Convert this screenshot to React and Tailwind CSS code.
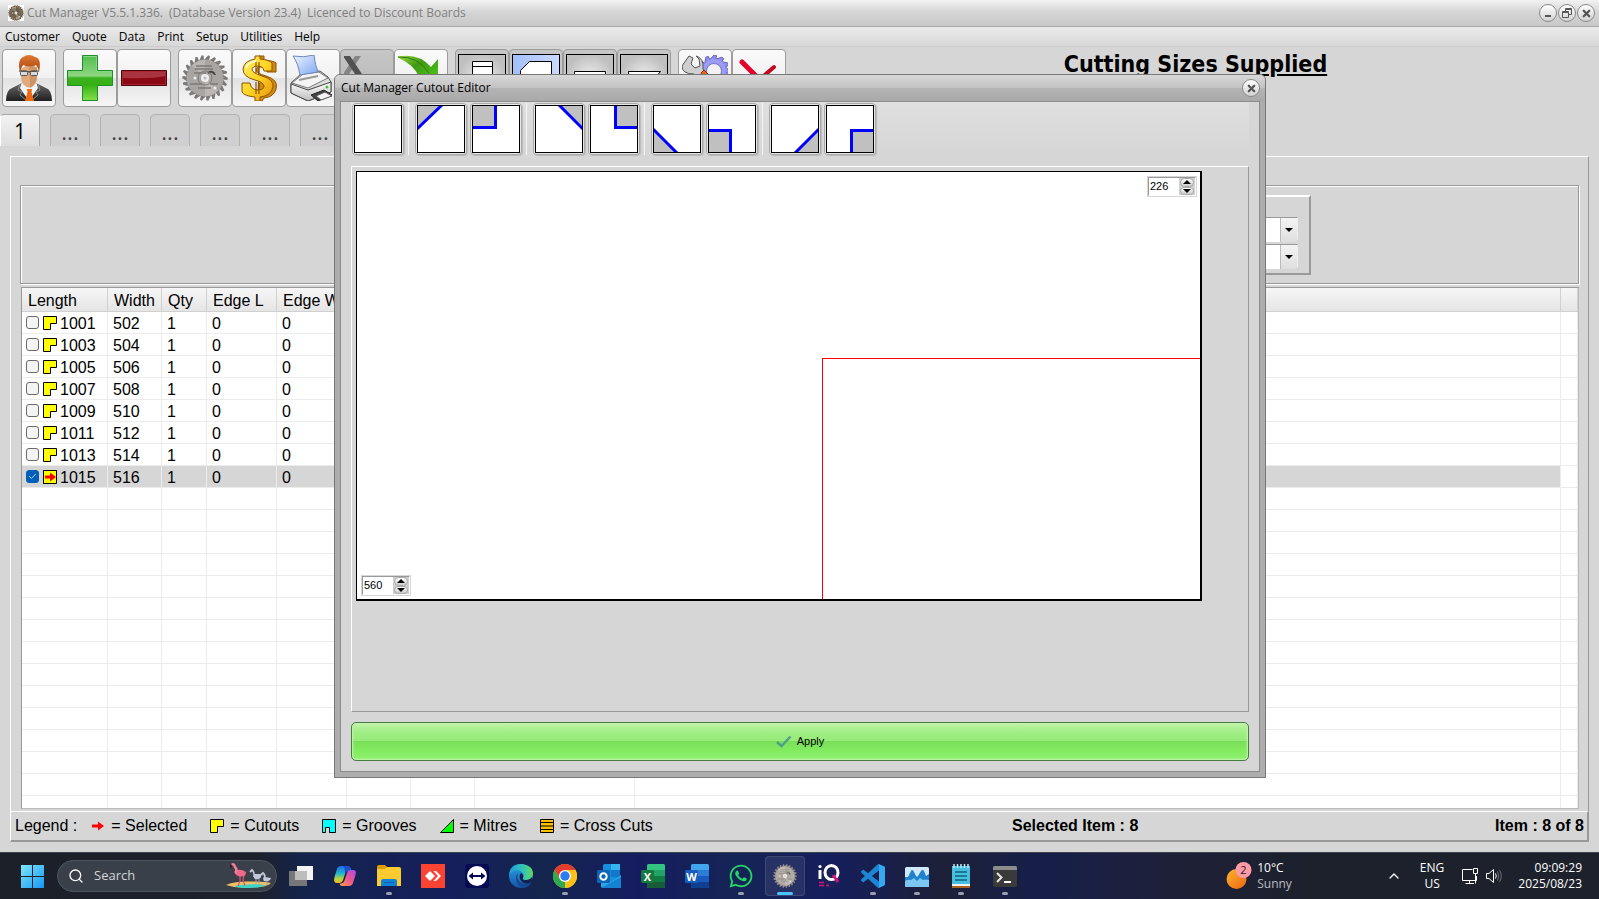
import React from "react";
import { FaWhatsapp } from "react-icons/fa";
import { Check, ChevronUp, Search, X } from "lucide-react";

const UI = "font-['Open_Sans','Noto_Sans',sans-serif]";

/* ---------- drawings ---------- */

function sawPath(cx, cy, outer, inner, teeth) {
  let d = "";
  for (let i = 0; i < teeth; i++) {
    const a = (i / teeth) * Math.PI * 2;
    const b = ((i + 0.3) / teeth) * Math.PI * 2;
    const p = (r, t) => `${(cx + r * Math.cos(t)).toFixed(2)} ${(cy + r * Math.sin(t)).toFixed(2)}`;
    d += `${i ? "L" : "M"}${p(outer, a)}L${p(outer * 0.97, b)}L${p(inner, b)}`;
  }
  return d + "Z";
}

function Saw({ className, light = "#a9a5a3", dark = "#7d7977" }) {
  return (
    <svg viewBox="0 0 46 46" className={className} aria-hidden="true">
      <path d={sawPath(23, 23, 23, 18, 22)} fill={dark} />
      <circle cx="23" cy="23" r="18.500" fill={light} />
      <path d="M23 23L10 10.500A18 18 0 0 1 23 5ZM23 23L36 35.500A18 18 0 0 1 23 41Z" fill="#c6c3c2" opacity=".6" />
      <path d="M14 11H30M13 14H31M12 18H24M8 29H20M28 29H36M16 33H29" stroke={dark} strokeWidth="1.500" />
      <path d="M26 18Q31 15 33 20" stroke="#444" strokeWidth="2" fill="none" />
      <circle cx="23" cy="23" r="7" fill="none" stroke={dark} />
      <circle cx="23" cy="23" r="4" fill="#eee" />
      <circle cx="23" cy="23" r="1.500" fill="#bbb" />
      <circle cx="13" cy="23" r="1.500" fill="#eee" />
      <circle cx="33" cy="33" r="1.500" fill="#eee" />
    </svg>
  );
}

const Person = () => (
  <svg viewBox="0 0 46 46" className="size-[46px]" aria-hidden="true">
    <defs>
      <linearGradient id="suit" x1="0" y1="0" x2="0" y2="1">
        <stop offset="0" stopColor="#6a6a6a" />
        <stop offset="1" stopColor="#1f1f1f" />
      </linearGradient>
      <linearGradient id="hair" x1="0" y1="0" x2="0" y2="1">
        <stop offset="0" stopColor="#e07a35" />
        <stop offset="1" stopColor="#a8410c" />
      </linearGradient>
    </defs>
    <path d="M0 46Q0 35 6 33L16 28H30L40 33Q46 35 46 46Z" fill="url(#suit)" />
    <path d="M16 27L14 33L23 46L32 33L30 27Z" fill="#f3f3f3" />
    <path d="M14 29L12 35L16 37L14 40L22 47M32 29L34 35L30 37L32 40L24 47" stroke="#8a8a8a" fill="none" />
    <path d="M21 34H26L25.500 37L28 46H19L21.500 37Z" fill="#ee6a12" />
    <path d="M15 14Q14 25 17 29Q23 36 29 29Q32 25 31 13L24 8Z" fill="#e0aa7c" />
    <path d="M23 12Q24 22 24 33Q31 30 31 20V12Z" fill="#cf9566" />
    <path d="M14 17Q11 5 17 2Q23-2 29 2Q36 3 33 17Q32 12 30 10Q25 13 17 10Q15 13 14 17Z" fill="url(#hair)" />
    <path d="M13 16H20L23 17L26 16H33" fill="none" stroke="#333" />
    <rect x="14.500" y="16.500" width="7" height="4" rx="1" fill="#d8dbe0" stroke="#555" />
    <rect x="24.500" y="16.500" width="7" height="4" rx="1" fill="#d8dbe0" stroke="#555" />
  </svg>
);

const Plus = () => (
  <svg viewBox="0 0 46 46" className="size-[46px]" aria-hidden="true">
    <defs>
      <linearGradient id="plus" x1="0" y1="0" x2="0" y2="1">
        <stop offset="0" stopColor="#4fbd4b" />
        <stop offset=".45" stopColor="#8ed782" />
        <stop offset=".5" stopColor="#3cb320" />
        <stop offset=".65" stopColor="#35b013" />
        <stop offset="1" stopColor="#86e04c" />
      </linearGradient>
    </defs>
    <path d="M15.500.500H30.500V15.500H45.500V30.500H30.500V45.500H15.500V30.500H.500V15.500H15.500Z" fill="url(#plus)" stroke="#1f8e2c" />
    <path d="M16.500 1.500H29.500V16.500H44.500V20" fill="none" stroke="#86d884" />
  </svg>
);

const Minus = () => (
  <svg viewBox="0 0 46 46" className="size-[46px]" aria-hidden="true">
    <path d="M.500 15.500H45.500V30.500H.500Z" fill="#8b0713" stroke="#4f050c" />
    <path d="M1 16H45V21Q30 24 1 23Z" fill="#a93440" />
    <path d="M1.500 29.500V16.500H44.500V29.500Z" fill="none" stroke="#a52531" />
  </svg>
);

const Dollar = () => (
  <svg viewBox="0 0 46 46" className="size-[46px]" aria-hidden="true">
    <defs>
      <linearGradient id="gold" x1="0" y1="0" x2="1" y2="1">
        <stop offset="0" stopColor="#fff06a" />
        <stop offset=".5" stopColor="#ffd425" />
        <stop offset="1" stopColor="#e5930c" />
      </linearGradient>
    </defs>
    <g strokeLinejoin="round" stroke="#8d5400">
      <path d="M23 1H28V5Q38 6 40 8V17H31Q30 12 25 12Q20 12 20 15Q20 18 30 21Q43 25 40 34Q38 42 28 43L26 46H22Z" fill="#d08a10" />
      <path
        d="M19 1H24V4Q34 5 36 8V16H28Q27 11 22 11Q16 11 16 15Q17 18 26 21Q38 24 37 32Q35 41 24 42V46H19V42Q8 41 6 37V28H14Q15 35 22 35Q28 35 28 31Q27 27 19 25Q7 22 7 14Q8 6 19 4Z"
        fill="url(#gold)"
      />
      <path d="M20 7V18M23 7V19M20 27V39M23 28V39" strokeWidth="1.200" fill="none" />
    </g>
    <path d="M10 13Q12 7 20 6" fill="none" stroke="#fffbd0" strokeWidth="2" />
  </svg>
);

const Printer = () => (
  <svg viewBox="0 0 46 46" className="size-[46px]" aria-hidden="true">
    <defs>
      <linearGradient id="paper" x1="0" y1="0" x2="1" y2="1">
        <stop offset="0" stopColor="#eef5ff" />
        <stop offset="1" stopColor="#7ea6f2" />
      </linearGradient>
      <linearGradient id="prn" x1="0" y1="0" x2="0" y2="1">
        <stop offset="0" stopColor="#fff" />
        <stop offset="1" stopColor="#bdbdbd" />
      </linearGradient>
    </defs>
    <g strokeLinejoin="round">
      <path d="M1 28L12 18L30 16L38 22L41 27V37L18 46L1 38Z" fill="#ddd" stroke="#555" />
      <path d="M1 29L18 35L41 27V37L18 46L1 38Z" fill="url(#prn)" stroke="#444" />
      <path d="M2 28L13 19L29 17L38 23L18 33Z" fill="#f4f4f4" stroke="#777" />
      <path d="M9 25L28 21" stroke="#999" strokeWidth="2" />
      <path d="M3 1Q14 3 24 0Q25 10 28 17L10 20Q8 8 3 1Z" fill="url(#paper)" stroke="#6d86b8" />
      <path d="M21 40L34 35L42 40L28 46Z" fill="#444" stroke="#222" />
      <path d="M26 41L35 37L42 41L31 45Z" fill="#f2f2f2" stroke="#555" />
      <circle cx="37" cy="32" r="1.500" fill="#4db845" />
    </g>
  </svg>
);

const SpreadsheetX = () => (
  <svg viewBox="0 0 46 46" className="size-[46px]" aria-hidden="true">
    <path d="M11 1H17L5 19H-1Z" fill="#858585" />
    <path d="M-1 1H6L18 19H11Z" fill="#515151" />
  </svg>
);

const GreenArrow = () => (
  <svg viewBox="0 0 46 46" className="size-[46px]" aria-hidden="true">
    <defs>
      <linearGradient id="arw" x1="0" y1="0" x2="1" y2="1">
        <stop offset="0" stopColor="#a2dc4c" />
        <stop offset=".4" stopColor="#3f9a10" />
        <stop offset="1" stopColor="#4ed01f" />
      </linearGradient>
    </defs>
    <path d="M-2 2Q20-3 33 12L40 4V30H16L22 23Q15 8-2 2Z" fill="url(#arw)" />
    <path d="M0 2Q20 1 31 18" fill="none" stroke="#2f7a0b" />
  </svg>
);

const ToolsGear = () => (
  <svg viewBox="0 0 46 46" className="size-[46px]" aria-hidden="true">
    <path d={sawPath(32, 16, 16, 12, 12)} fill="#8f8ff0" stroke="#6464b8" />
    <circle cx="32" cy="16" r="12" fill="#9c9cf5" />
    <circle cx="32" cy="16" r="7.500" fill="#f2f2f2" stroke="#7474c4" />
    <path d="M7 1L11 3L9 9L13 13L18 11L17 4L14 1Q22 3 21 14L30 30H20L12 19Q0 19 0 11L2 8Z" fill="#cfcfcf" stroke="#555" />
    <path d="M19 18L22 15L26 19L22 23Z" fill="#e8641a" stroke="#8c3406" />
  </svg>
);

const RedCross = () => (
  <svg viewBox="0 0 46 46" className="size-[46px]" aria-hidden="true">
    <path d="M6 7L36 37" stroke="#e4022c" strokeWidth="5" strokeLinecap="round" />
    <path d="M38 12L10 36" stroke="#c00a24" strokeWidth="4" strokeLinecap="round" />
  </svg>
);

function ViewPicture({ shape, active }) {
  return (
    <svg viewBox="0 0 48 48" className="size-[48px]" aria-hidden="true">
      <defs>
        <radialGradient id="vg">
          <stop offset="0" stopColor="#efefef" />
          <stop offset="1" stopColor="#c0c0c0" />
        </radialGradient>
        <linearGradient id="vb" x1="0" y1="0" x2="1" y2="0">
          <stop offset="0" stopColor="#a3bffb" />
          <stop offset="1" stopColor="#c9d9ff" />
        </linearGradient>
      </defs>
      <rect x=".5" y=".5" width="47" height="47" fill={active ? "url(#vb)" : "url(#vg)"} stroke="#000" />
      <path d={shape} fill="#fff" stroke="#000" />
    </svg>
  );
}

const CutoutMark = ({ selected, className = "" }) => (
  <svg viewBox="0 0 14 14" className={`size-[14px] shrink-0 ${className}`} aria-hidden="true">
    <path d="M.5.5H13.500V7.500H7.500V13.500H.5Z" fill="#ff0" stroke="#000" />
    {selected && <path d="M.5.5H13.500V13.500H.5Z" fill="#ff0" stroke="#000" />}
    {selected && <path d="M2 5.500H7V2.500L13 7L7 11.500V8.500H2Z" fill="#f00" />}
  </svg>
);

/* ---------- main window ---------- */

function RoundButton({ label, children }) {
  return (
    <button
      aria-label={label}
      className="grid size-[18px] place-items-center rounded-full border border-[#8a8a8a] bg-linear-to-b from-white to-[#d2d2d2] text-[#555]"
    >
      {children}
    </button>
  );
}

function TitleBar() {
  return (
    <header className="flex h-[27px] items-center border-b border-[#a8a8a8] bg-linear-to-b from-[#f2f2f2] via-[#d4d4d4] to-[#c9c9c9] pl-2 pr-1">
      <span className="grid size-4 place-items-center bg-white">
        <Saw className="size-4" light="#7b6a52" dark="#5d4e3a" />
      </span>
      <h1 className="flex gap-[6px] pl-[3px] text-[12px] text-[#7f7f7f]">
        <span>Cut Manager V5.5.1.336.</span>
        <span>(Database Version 23.4)</span>
        <span>Licenced to Discount Boards</span>
      </h1>
      <div className="ml-auto flex gap-px">
        <RoundButton label="Minimise">
          <svg viewBox="0 0 10 10" className="size-[10px]"><path d="M2 8H8" stroke="#555" strokeWidth="2" /></svg>
        </RoundButton>
        <RoundButton label="Restore">
          <svg viewBox="0 0 10 10" className="size-[10px]" fill="none" stroke="#555">
            <path d="M3.500 3V.5H9.500V6.500H7M3 1.500H9.500M.5 3.500H6.500V9.500H.5ZM.5 4.500H6" />
          </svg>
        </RoundButton>
        <RoundButton label="Close">
          <X className="size-[11px]" strokeWidth={5} />
        </RoundButton>
      </div>
    </header>
  );
}

const MENU = ["Customer", "Quote", "Data", "Print", "Setup", "Utilities", "Help"];

const TOOLS = [
  [["Customer", <Person />]],
  [["Add", <Plus />], ["Remove", <Minus />]],
  [
    ["Cutting", <Saw className="size-[46px]" />],
    ["Price", <Dollar />],
    ["Print", <Printer />],
    ["Spreadsheet", <SpreadsheetX />, "disabled"],
    ["Send", <GreenArrow />],
  ],
  [
    ["List view", <ViewPicture shape="M14.500 7.500H34.500V40.500H14.500ZM14.500 12.500H34.500" />, "view"],
    ["Cutout view", <ViewPicture active shape="M17.500 7.500H39.500V40.500H8.500V16.500Z" />, "view"],
    ["Groove view", <ViewPicture shape="M8.500 17.500H39.500V36.500H8.500Z" />, "view"],
    ["Mitre view", <ViewPicture shape="M8.500 17.500H40.500L30 30.500H8.500Z" />, "view"],
  ],
  [["Settings", <ToolsGear />], ["Cancel", <RedCross />]],
];

const TOOL_STYLE = {
  normal: "bg-[linear-gradient(#fafafa,#f1f1f1_50%,#e2e2e2_51%,#f6f6f6)]",
  disabled: "bg-linear-to-b from-[#c6c6c6] to-[#b4b4b4]",
  view: "bg-[#c6c6c6]",
};

function Toolbar() {
  return (
    <div className="flex px-[2px] pt-[2px]">
      <div className="flex gap-[7px]">
        {TOOLS.map((group, g) => (
          <div key={g} className="flex">
            {group.map(([label, icon, kind = "normal"]) => (
              <button
                key={label}
                aria-label={label}
                className={`grid h-[58px] w-[54px] place-items-center rounded-[4px] border border-[#9c9c9c] ${TOOL_STYLE[kind]}`}
              >
                {icon}
              </button>
            ))}
          </div>
        ))}
      </div>
      <h2 className="flex-1 pl-2 text-center font-['DejaVu_Sans_Condensed','DejaVu_Sans',sans-serif] text-[23px] leading-[30px] font-bold underline decoration-2 underline-offset-2">
        Cutting Sizes Supplied
      </h2>
    </div>
  );
}

function Tabs() {
  return (
    <div role="tablist" className="mt-[7px] flex gap-[10px]">
      <button role="tab" aria-selected="true" className="h-8 w-10 rounded-t-[4px] border border-b-0 border-[#a6a6a6] border-l-white bg-linear-to-b from-[#f2f2f2] to-[#dedede] text-[21px] leading-7">
        1
      </button>
      {[2, 3, 4, 5, 6, 7].map((n) => (
        <button key={n} role="tab" aria-label={`Sheet ${n}`} className="h-8 w-10 rounded-t-[5px] border border-b-0 border-[#b2b2b2] bg-[#cfcfcf] text-[22px] leading-8 text-[#444]">
          ...
        </button>
      ))}
    </div>
  );
}

function Combo({ label }) {
  return (
    <div className="grid h-[23px] border border-[#999] border-r-[#eee] border-b-[#eee] bg-white">
      <select aria-label={label} className="col-start-1 row-start-1 w-full appearance-none bg-white outline-none" />
      <span className="pointer-events-none col-start-1 row-start-1 grid w-[17px] place-items-center justify-self-end border-l border-[#bbb] bg-linear-to-b from-[#f4f4f4] to-[#dedede]">
        <svg viewBox="0 0 8 4" className="h-1 w-2"><path d="M0 0H8L4 4Z" /></svg>
      </span>
    </div>
  );
}

const ROWS = Array.from({ length: 8 }, (_, i) => [1001 + i * 2, 502 + i * 2, 1, 0, 0]);
const TD = "border-r border-b border-[#ececec] p-0 pt-[2px] pl-[5px]";

function PartsTable() {
  return (
    <div className="mt-[2px] mr-[9px] mb-[2px] ml-[10px] min-h-0 flex-1 overflow-hidden border border-[#999] border-r-[#bbb] border-b-[#bbb] bg-white">
      <table className="w-full table-fixed border-separate border-spacing-0 font-['Liberation_Sans',Arial,sans-serif] text-[16px] leading-[19px]">
        <colgroup>
          <col className="w-[86px]" />
          <col className="w-[54px]" />
          <col className="w-[45px]" />
          <col className="w-[70px]" />
          <col className="w-[70px]" />
          <col className="w-[64px]" />
          <col className="w-[64px]" />
          <col className="w-[160px]" />
          <col />
          <col className="w-[17px]" />
        </colgroup>
        <thead>
          <tr className="h-6 bg-linear-to-b from-[#f6f6f6] to-[#e4e4e4]">
            {["Length", "Width", "Qty", "Edge L", "Edge W", "", "", "", "", ""].map((h, i) => (
              <th key={i} scope="col" className="overflow-hidden border-r border-b border-[#d0d0d0] p-0 pt-[2px] pl-[6px] text-left font-normal whitespace-nowrap">
                {h}
              </th>
            ))}
          </tr>
        </thead>
        <tbody>
          {Array.from({ length: 23 }, (_, r) => {
            const row = ROWS[r];
            const selected = r === 7;
            return (
              <tr key={r} className="h-[22px]">
                {Array.from({ length: 10 }, (_, c) => (
                  <td key={c} className={`${TD} ${selected && c < 9 ? "bg-[#d6d6d6]" : ""}`}>
                    {c === 0 && row ? (
                      <label className="flex items-start">
                        <span className="mt-[2px] mr-1 -ml-px grid size-[13px]">
                          <input
                            type="checkbox"
                            defaultChecked={selected}
                            className="col-start-1 row-start-1 size-[13px] appearance-none rounded-[3px] border border-[#6a6a6a] bg-[#f4f4f4] checked:border-[#005fb8] checked:bg-[#005fb8]"
                          />
                          {selected && <Check className="pointer-events-none col-start-1 row-start-1 size-[9px] place-self-center text-white" />}
                        </span>
                        <CutoutMark selected={selected} className="mt-[2px]" />
                        <span className="pl-[3px]">{row[0]}</span>
                      </label>
                    ) : (
                      row?.[c]
                    )}
                  </td>
                ))}
              </tr>
            );
          })}
        </tbody>
      </table>
    </div>
  );
}

const LEGEND = [
  ["Selected", <svg viewBox="0 0 14 14" className="size-[14px]"><path d="M1 5.500H7V2.500L13 7L7 11.500V8.500H1Z" fill="#f00" /></svg>],
  ["Cutouts", <CutoutMark />],
  ["Grooves", <svg viewBox="0 0 14 14" className="size-[14px]"><path d="M.5.5H13.500V13.500H7.500V8.500H3.500V13.500H.5Z" fill="#0ff" stroke="#000" /></svg>],
  ["Mitres", <svg viewBox="0 0 14 14" className="size-[14px]"><path d="M13.500.5V13.500H.5Z" fill="#0f0" stroke="#000" /></svg>],
  ["Cross Cuts", <svg viewBox="0 0 14 14" className="size-[14px]"><path d="M.5.5H13.500V13.500H.5ZM.5 3.500H13.500M.5 7H13.500M.5 10.500H13.500" fill="#ffc000" stroke="#000" /></svg>],
];

function Legend() {
  return (
    <footer className="flex h-[31px] items-center justify-between border-t border-r-2 border-b-2 border-l border-[#999] border-t-white border-l-white pr-[3px] pl-1 font-['Liberation_Sans',Arial,sans-serif] text-[16px]">
      <div className="flex items-center">
        <span className="mr-[14px]">Legend :</span>
        {LEGEND.map(([name, icon]) => (
          <span key={name} className="mr-[23px] flex items-center gap-[6px]">
            {icon} = {name}
          </span>
        ))}
      </div>
      <div className="flex w-[572px] justify-between font-bold">
        <span>Selected Item : 8</span>
        <span>Item : 8 of 8</span>
      </div>
    </footer>
  );
}

function Workspace() {
  return (
    <main className="mx-[10px] my-[10px] flex min-h-0 flex-1 flex-col">
      <div className="flex min-h-0 flex-1 flex-col border-t border-r border-l border-[#999] border-t-white border-l-white pt-7">
        <section className="mx-[9px] mb-px h-[99px] shrink-0 border border-[#999] shadow-[1px_1px_0_#fff,inset_1px_1px_0_#fff]">
          <div className="mt-[9px] mr-[267px] ml-auto flex h-20 w-[300px] flex-col gap-1 border-2 border-[#999] border-t-white border-l-white pt-5 pr-[11px] pl-6">
            <Combo label="Board" />
            <Combo label="Edging" />
          </div>
        </section>
        <PartsTable />
      </div>
      <Legend />
    </main>
  );
}

/* ---------- cutout editor ---------- */

const SHAPES = [
  [{ label: "No cutout" }],
  [
    { label: "Top left corner", fill: "M0 0H23L0 23Z", line: "M24 -1L-1 23" },
    { label: "Top left notch", fill: "M0 0H22V22H0Z", line: "M22.500 0V21.500H0" },
  ],
  [
    { label: "Top right corner", fill: "M46 0H23L46 23Z", line: "M23 -1L47 23" },
    { label: "Top right notch", fill: "M46 0H25V22H46Z", line: "M24.500 0V21.500H46" },
  ],
  [
    { label: "Bottom left corner", fill: "M0 46H23L0 23Z", line: "M-1 23L23 47" },
    { label: "Bottom left notch", fill: "M0 46H22V25H0Z", line: "M0 24.500H21.500V46" },
  ],
  [
    { label: "Bottom right corner", fill: "M46 46H23L46 23Z", line: "M47 23L23 47" },
    { label: "Bottom right notch", fill: "M46 46H25V25H46Z", line: "M46 24.500H24.500V46" },
  ],
];

function Spinner({ label, value, className }) {
  return (
    <div className={`absolute flex h-[21px] w-[50px] border border-[#d6d6d6] bg-[#d6d6d6] ${className}`}>
      <div className="flex w-full border border-[#999] border-r-white border-b-white bg-white">
        <input aria-label={label} defaultValue={value} className="w-0 flex-1 bg-white pb-px pl-px text-[11px] outline-none" />
        <div className="flex w-4 flex-col bg-[#d0d0d0] px-px">
          {["M0 4H8L4 0Z", "M0 0H8L4 4Z"].map((d, i) => (
            <button key={i} aria-label={`${i ? "Decrease" : "Increase"} ${label}`} className="grid flex-1 place-items-center rounded-full border border-[#aaa] bg-linear-to-b from-white to-[#ccc]">
              <svg viewBox="0 0 8 4" className="h-1 w-2"><path d={d} /></svg>
            </button>
          ))}
        </div>
      </div>
    </div>
  );
}

function CutoutEditor() {
  return (
    <div
      role="dialog"
      aria-label="Cut Manager Cutout Editor"
      className="absolute top-[74px] right-[333px] left-[334px] rounded-t-[6px] border border-[#777] bg-[#adadad] px-[5px] pb-[5px]"
    >
      <div className="-mx-[5px] flex h-[26px] items-center rounded-t-[5px] bg-[linear-gradient(#d8d8d8,#c2c2c2_50%,#b4b4b4_51%,#a9a9a9)] pr-[5px] pl-[6px] text-[12px]">
        <span className="flex-1">Cut Manager Cutout Editor</span>
        <RoundButton label="Close editor">
          <X className="size-[11px]" strokeWidth={5} />
        </RoundButton>
      </div>
      <div className="border border-[#8c8c8c] bg-[#d6d6d6] px-[10px] pb-[10px]">
        <div className="flex bg-linear-to-b from-[#dfdfdf] to-[#d6d6d6] pt-px pl-px">
          {SHAPES.map((group, g) => (
            <div key={g} className="flex">
              {g > 0 && <span className="mr-[6px] ml-px w-px bg-[#f4f4f4]" />}
              {group.map((s) => (
                <button
                  key={s.label}
                  aria-label={s.label}
                  className="mr-[3px] grid size-[52px] place-items-center rounded-[4px] border border-[#a8a8a8] bg-[#e8e8e8] shadow-[1px_1px_1px_#bbb]"
                >
                  <span className="border border-black bg-white">
                    <svg viewBox="0 0 46 46" className="size-[46px]">
                      {s.fill && <path d={s.fill} fill="#c0c0c0" />}
                      {s.line && <path d={s.line} fill="none" stroke="#00f" strokeWidth="3" />}
                    </svg>
                  </span>
                </button>
              ))}
            </div>
          ))}
        </div>
        <div className="mt-[11px] h-[546px] border border-[#999] border-t-white border-l-white p-1 pr-[46px] font-['Liberation_Sans',Arial,sans-serif]">
          <div className="relative h-[430px] border border-r-2 border-b-2 border-black bg-white">
            <div className="absolute right-0 bottom-0 h-[241px] w-[378px] border-t border-l border-[#f00]" />
            <Spinner label="width" value="226" className="top-1 right-[3px]" />
            <Spinner label="height" value="560" className="bottom-[3px] left-1" />
          </div>
        </div>
        <button className="mt-[10px] flex h-[39px] w-full items-center justify-center gap-[5px] rounded-[5px] border border-[#4a7a45] bg-[linear-gradient(#c0f3a8,#a0ee84_25%,#96ea78_49%,#7adf58_50%,#84ee62_80%,#90f070)] font-['Liberation_Sans',Arial,sans-serif] text-[11px] shadow-[inset_0_0_2px_1px_#c8f5b4]">
          <svg viewBox="0 0 16 13" className="h-[13px] w-4" fill="none"><path d="M1 7L5.500 11L14.500 1.500" stroke="#4fa08c" strokeWidth="2.500" /></svg>
          Apply
        </button>
      </div>
    </div>
  );
}

/* ---------- taskbar ---------- */

const svg24 = (children) => <svg viewBox="0 0 24 24" className="size-6" aria-hidden="true">{children}</svg>;

function OfficeIcon({ letter, colors }) {
  return svg24(
    <>
      <rect x="6" y="0" width="18" height="24" rx="1.500" fill={colors[0]} />
      <rect x="6" y="6" width="18" height="6" fill={colors[1]} />
      <rect x="6" y="12" width="18" height="6" fill={colors[2]} />
      <path d="M6 18H24V22.500Q24 24 22.500 24H7.500Q6 24 6 22.500Z" fill={colors[3]} />
      <rect x="0" y="6" width="13" height="13" rx="1.500" fill={colors[4]} />
      <text x="6.500" y="16.500" textAnchor="middle" fontSize="11" fontWeight="700" fill="#fff" fontFamily="Open Sans">{letter}</text>
    </>
  );
}

const APPS = [
  ["Task view", svg24(<><rect x="8" y="2" width="16" height="14" fill="#f3f3f3" /><rect y="7" width="18" height="15" fill="#777" /><rect x="6" y="7" width="12" height="9" fill="#bdbdbd" /></>)],
  ["Copilot", svg24(
    <>
      <defs>
        <linearGradient id="cpa" x1="0" y1="0" x2="0" y2="1"><stop offset="0" stopColor="#1a6be8" /><stop offset=".45" stopColor="#22b8c8" /><stop offset=".75" stopColor="#b8d43a" /><stop offset="1" stopColor="#f5b52a" /></linearGradient>
        <linearGradient id="cpb" x1="1" y1="0" x2="0" y2="1"><stop offset="0" stopColor="#a24bf0" /><stop offset=".5" stopColor="#f0568c" /><stop offset="1" stopColor="#fba23a" /></linearGradient>
      </defs>
      <path d="M8 2H15Q17 2 18 5L18.500 7H15Q13 7 12 10L10 16Q9 19 6 19H4Q0 19 1.500 13L4 5Q5 2 8 2Z" fill="url(#cpa)" />
      <path d="M16 22H9Q7 22 6.500 19.500H8Q11 19 12 15L14 9Q15 6 18 6H20Q24 6 22.500 11L20 19Q19 22 16 22Z" fill="url(#cpb)" />
      <path d="M10 2H15Q17 2 18 6Q15 5.500 13.500 8L12 10Q12 4 10 2Z" fill="#1b4fd0" />
    </>
  )],
  ["File Explorer", svg24(<><path d="M0 3Q0 1 2 1H8L10 3V6H0Z" fill="#e09a06" /><path d="M0 5H8L10 3H22Q24 3 24 5V22H0Z" fill="#fccb2f" /><path d="M4 22V17Q4 15 6 15H18Q20 15 20 17V22Z" fill="#1282d8" /><path d="M7 18.500H17" stroke="#0b60ac" /></>), "dot"],
  ["AnyDesk", svg24(<><rect width="24" height="24" fill="#fb4334" /><path d="M9 7L14 12L9 17L4 12ZM12.500 7H15L20 12L15 17H12.500L17 12Z" fill="#fff" /></>)],
  ["TeamViewer", svg24(<><rect width="24" height="24" rx="3" fill="#060a52" /><circle cx="12" cy="12" r="10" fill="#fff" /><path d="M3.500 12L8 8.500V11H16V8.500L20.500 12L16 15.500V13H8V15.500Z" fill="#060a52" /></>)],
  ["Edge", svg24(
    <>
      <defs>
        <linearGradient id="ega" x1="0" y1="0" x2="1" y2="0"><stop offset="0" stopColor="#1f9bd8" /><stop offset=".6" stopColor="#33c6b4" /><stop offset="1" stopColor="#62d858" /></linearGradient>
        <linearGradient id="egb" x1="0" y1="0" x2="0" y2="1"><stop offset="0" stopColor="#2aa3e4" /><stop offset="1" stopColor="#1455a8" /></linearGradient>
      </defs>
      <circle cx="12" cy="12" r="12" fill="url(#egb)" />
      <path d="M0 11Q1 0 12 0Q24 1 24 10Q23 16 17 16Q13 16 14 14Q16 11 13 8Q7 3 0 11Z" fill="url(#ega)" />
      <path d="M9 9Q7 14 11 18Q15 21 21 19L22 18.500Q19 24 13 24Q8 22 7 15Q7 11 9 9Z" fill="#134a94" />
      <path d="M14 14Q13 16 17 16Q21 16 23 13L24 17L21 19Q14 21 11 15Q10 11 12 9Q15 11 14 14Z" fill="#14204f" />
    </>
  )],
  ["Chrome", svg24(<><circle cx="12" cy="12" r="12" fill="#fbc116" /><path d="M1.600 6A12 12 0 0 1 22.400 6H12L7 15Z" fill="#e33b2e" /><path d="M1.600 6L6.800 15L12 18L12 24A12 12 0 0 1 1.600 6Z" fill="#2da94f" /><path d="M22.400 6A12 12 0 0 1 12 24L17.200 15L17 6Z" fill="#fbc116" /><circle cx="12" cy="12" r="6" fill="#fff" /><circle cx="12" cy="12" r="4.700" fill="#2f7cf0" /></>), "dot"],
  ["Outlook", svg24(<><rect x="6" y="0" width="17" height="18" rx="1.500" fill="#1490df" /><path d="M14 0H23V7H14Z" fill="#37b4f2" /><path d="M14 6H23V13H14Z" fill="#1279c8" /><path d="M4 12L14 18L24 11V23Q24 24 22 24H6Q4 24 4 22Z" fill="#28a8ea" /><path d="M4 24L24 13V24Z" fill="#1683d0" /><rect x="0" y="6" width="13" height="13" rx="1.500" fill="#0f64b6" /><circle cx="6.500" cy="12.500" r="3.200" stroke="#fff" strokeWidth="2" fill="none" /></>)],
  ["Excel", <OfficeIcon letter="X" colors={["#32c481", "#21a366", "#107c41", "#185c37", "#17783f"]} />],
  ["Word", <OfficeIcon letter="W" colors={["#41a5ee", "#2b7cd3", "#185abd", "#103f91", "#1a5cbe"]} />],
  ["WhatsApp", <FaWhatsapp className="size-[26px] text-[#25d366]" />, "dot"],
  ["Cut Manager", <Saw className="size-6" light="#aaa39c" dark="#8c857e" />, "active"],
  ["iQ", svg24(<><rect x="2" y="3" width="21" height="21" rx="3" fill="#1a2058" /><circle cx="3" cy="2.500" r="1.600" fill="#fff" /><path d="M3 6V15" stroke="#fff" strokeWidth="3" /><ellipse cx="14.500" cy="8.500" rx="6.500" ry="7" stroke="#fff" strokeWidth="3" fill="none" /><path d="M16 11L21 18" stroke="#d8127d" strokeWidth="3" /><path d="M2 18.500H7M2 21.500H7M9 21.500H12" stroke="#d8127d" strokeWidth="1.500" /></>)],
  ["Visual Studio Code", svg24(<><path d="M23.150 2.587L18.210.210a1.494 1.494 0 0 0-1.705.290l-9.460 8.630-4.120-3.128a.999.999 0 0 0-1.276.057L.327 7.261A1 1 0 0 0 .326 8.740L3.899 12 .326 15.260a1 1 0 0 0 .001 1.479L1.650 17.940a.999.999 0 0 0 1.276.057l4.120-3.128 9.460 8.630a1.492 1.492 0 0 0 1.704.290l4.942-2.377A1.500 1.500 0 0 0 24 20.060V3.939a1.500 1.500 0 0 0-.850-1.352zm-5.146 14.861L10.826 12l7.178-5.448v10.896z" fill="#1c86d2" /><path d="M18 .3L23.150 2.587Q24 3 24 4V20Q24 21 23.150 21.400L18 23.700Z" fill="#35a8f0" /></>), "dot"],
  ["Resource Monitor", svg24(<><rect y="3" width="24" height="20" rx="1.500" fill="#cfe8fb" /><path d="M0 13H3L6 7Q7 5 8.500 7L11 12L12 13L13 12L16 7Q17.500 5 19 7L21 12L24 10V18H0Z" fill="#1e82cc" /><path d="M0 17Q3 15 6 16L9 14L12 17L15 14L18 16Q21 15 24 16V21.500Q24 23 22.500 23H1.500Q0 23 0 21.500Z" fill="#7cc6f4" /></>), "dot"],
  ["Notepad", svg24(<><path d="M3 2H21V22H3Z" fill="#46bfe0" /><path d="M3 20H21V22H3Z" fill="#f2f2f2" /><path d="M3 22H21V24H3Z" fill="#a8611f" /><path d="M5 0V4M8.500 0V4M12 0V4M15.500 0V4M19 0V4" stroke="#bfeaf6" strokeWidth="1.500" /><path d="M6 8H18M6 12H18M6 16H18" stroke="#10627e" strokeWidth="1.500" /></>), "dot"],
  ["Terminal", svg24(<><rect y="2" width="24" height="21" rx="1.500" fill="#3a3a3a" /><path d="M0 3.500Q0 2 1.500 2H22.500Q24 2 24 3.500V6H0Z" fill="#8c8c8c" /><path d="M4 9L8.500 13.500L4 18" stroke="#e6e6e6" strokeWidth="2" fill="none" /><path d="M11 18H18" stroke="#fff" strokeWidth="2" /></>), "dot"],
];

const Flamingos = () => (
  <svg viewBox="0 0 46 26" className="h-[26px] w-[46px]" aria-hidden="true">
    <path d="M0 22Q8 18 24 18.500Q40 18 45 20Q42 23 34 24Q20 25 8 24Z" fill="#f2c063" />
    <path d="M8 23Q20 20 40 22Q34 25 22 25Q12 25 8 23Z" fill="#38d6c8" />
    <path d="M14 12L14 18L12 23M18 12L17 17L19 23" stroke="#e0506c" strokeWidth="1.200" fill="none" />
    <path d="M20 9Q20 15 12 13Q8 11 9 8Q14 5 20 9Z" fill="#f0688a" />
    <path d="M9 10Q12 7 9 4Q8 0 6 2" stroke="#f57c9a" strokeWidth="2.500" fill="none" />
    <path d="M5 2L5 5" stroke="#411" strokeWidth="1.500" />
    <path d="M30 16V22M33 16L33 22M41 17V22" stroke="#9da1b6" />
    <path d="M35 11Q36 17 29 16Q26 13 29 11ZM45 15Q44 19 38 18Q36 15 39 14Z" fill="#c3c8da" />
    <path d="M28 14Q29 9 26 7L24 9M38 16Q40 12 37 10L35 12" stroke="#c3c8da" strokeWidth="1.800" fill="none" />
  </svg>
);

function Taskbar() {
  return (
    <nav
      aria-label="Taskbar"
      className="relative flex h-[47px] shrink-0 items-center border-t border-[#3c434f] bg-[linear-gradient(90deg,#1c2029_0%,#1c212b_16%,#14234c_19%,#151f5c_28%,#14254e_34%,#151d60_40%,#152456_46%,#151e5c_52%,#1d2038_59%,#161f4a_65%,#1e2038_73%,#1c212c_82%,#1c212b_100%)] text-[12px] text-white"
    >
      <button aria-label="Start" className="ml-[10px] grid h-10 w-11 place-items-center">
        <svg viewBox="0 0 23 23" className="size-[23px]">
          <defs>
            <linearGradient id="win" x1="0" y1="0" x2="1" y2="1"><stop offset="0" stopColor="#7fe6fb" /><stop offset="1" stopColor="#1496f4" /></linearGradient>
          </defs>
          <path d="M0 0H11V11H0ZM12 0H23V11H12ZM0 12H11V23H0ZM12 12H23V23H12Z" fill="url(#win)" />
        </svg>
      </button>
      <label className="mr-[2px] ml-[3px] flex h-8 w-[220px] items-center rounded-full border border-[#50565f] bg-[#3a404a] pr-1 pl-[10px]">
        <Search className="mr-[10px] size-4 text-white" />
        <input type="search" placeholder="Search" aria-label="Search" className="w-0 flex-1 bg-transparent text-[13px] outline-none placeholder:text-[#d3d5d8]" />
        <Flamingos />
      </label>
      <div className="flex">
        {APPS.map(([name, icon, state]) => (
          <button key={name} aria-label={name} className="relative grid h-[46px] w-11 place-items-center">
            {state === "active" && <span className="absolute inset-x-[2px] inset-y-[3px] rounded-[4px] border border-[#ffffff1c] bg-[#ffffff14]" />}
            {icon}
            {state === "dot" && <span className="absolute bottom-1 h-[3px] w-[6px] rounded-full bg-[#9a9fb0]" />}
            {state === "active" && <span className="absolute bottom-1 h-[3px] w-4 rounded-full bg-[#4cc2ff]" />}
          </button>
        ))}
      </div>
      <div className="ml-auto flex items-center pr-[17px] leading-4">
        <div className="mr-[94px] flex items-center gap-[5px]">
          <svg viewBox="0 0 26 28" className="h-7 w-[26px]" aria-hidden="true">
            <defs>
              <linearGradient id="sun" x1="0" y1="0" x2="1" y2="1"><stop offset="0" stopColor="#fcb62c" /><stop offset="1" stopColor="#ee6412" /></linearGradient>
            </defs>
            <circle cx="10.500" cy="17" r="10" fill="url(#sun)" />
            <circle cx="17.500" cy="8" r="8" fill="#ff9aa6" />
            <text x="17.500" y="12" textAnchor="middle" fontSize="11" fill="#222" fontFamily="Open Sans">2</text>
          </svg>
          <div>
            <div>10°C</div>
            <div className="text-[#b9bcc2]">Sunny</div>
          </div>
        </div>
        <ChevronUp className="mr-[18px] size-4" />
        <div className="mr-[18px] text-center">ENG<br />US</div>
        <svg viewBox="0 0 16 16" className="mr-2 size-4" fill="none" stroke="#fff" aria-hidden="true">
          <path d="M10.500 1.500H.5V12.500H14.500V8M7.500 12.500V15.500M3.500 15.500H12M11.500.5H15.500V5.500H11.500ZM13.500 5.500V15.500" />
        </svg>
        <svg viewBox="0 0 16 16" className="mr-4 size-4" fill="none" stroke="#fff" aria-hidden="true">
          <path d="M.5 5.500H3L7.500 1.500V14.500L3 10.500H.5ZM9.500 5.500Q11 8 9.500 10.500" />
          <path d="M11.500 3.500Q14 8 11.500 12.500M13.500 2Q17 8 13.500 14" stroke="#6a6f78" />
        </svg>
        <div className="text-right">09:09:29<br />2025/08/23</div>
      </div>
    </nav>
  );
}

export default function App() {
  return (
    <div className={`relative flex h-screen flex-col overflow-hidden bg-[#d6d6d6] text-black ${UI}`}>
      <TitleBar />
      <nav aria-label="Menu" className="flex h-5 items-center gap-3 border-b border-[#ccc] bg-linear-to-b from-[#eaeaea] to-[#d8d8d8] pl-[5px] text-[12px] leading-4">
        {MENU.map((m) => (
          <button key={m}>{m}</button>
        ))}
      </nav>
      <Toolbar />
      <Tabs />
      <Workspace />
      <Taskbar />
      <CutoutEditor />
    </div>
  );
}
